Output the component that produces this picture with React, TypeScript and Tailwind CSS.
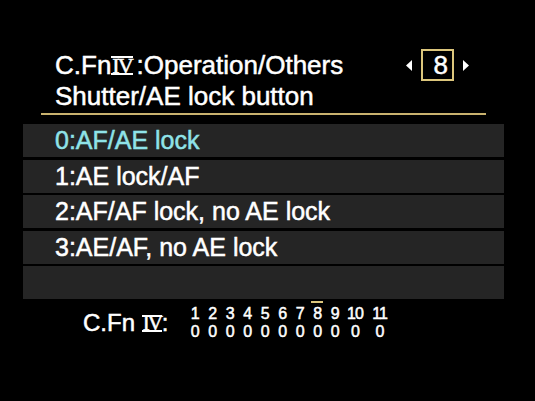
import React from "react";

const options = ["0:AF/AE lock", "1:AE lock/AF", "2:AF/AF lock, no AE lock", "3:AE/AF, no AE lock", ""];

const fnCols = [
  { n: "1", v: "0", w: "w-[17.5px]" },
  { n: "2", v: "0", w: "w-[17.5px]" },
  { n: "3", v: "0", w: "w-[17.5px]" },
  { n: "4", v: "0", w: "w-[17.5px]" },
  { n: "5", v: "0", w: "w-[17.5px]" },
  { n: "6", v: "0", w: "w-[17.5px]" },
  { n: "7", v: "0", w: "w-[17.5px]" },
  { n: "8", v: "0", w: "w-[17.5px]" },
  { n: "9", v: "0", w: "w-[17.5px]" },
  { n: "10", v: "0", w: "w-[23px]" },
  { n: "11", v: "0", w: "w-[26px]" },
];

// roman "IV" with bars top and bottom, like the camera font
function RomanIV({ size }: { size: "lg" | "md" }) {
  return (
    <span
      className={
        size === "lg"
          ? "inline-block border-y-2 border-white font-['Liberation_Serif',serif] text-[22px] leading-[15px] h-[19px] tracking-[-2px] px-[1px] mr-[4px] align-[1px]"
          : "inline-block border-y-2 border-white font-['Liberation_Serif',serif] text-[21px] leading-[13px] h-[17px] tracking-[-2px] px-[1px] align-[1px]"
      }
    >
      IV
    </span>
  );
}

export default function App() {
  return (
    <div className="w-[535px] h-[401px] bg-black text-white font-['Liberation_Sans',Arial,sans-serif] overflow-hidden [-webkit-text-stroke:0.5px_currentColor]">
      {/* header */}
      <div className="pt-[50px] pl-[55px] pr-[66px]">
        <div className="flex items-center justify-between h-[30px]">
          <div className="text-[26px] leading-[30px] whitespace-nowrap">
            C.Fn<RomanIV size="lg" />:Operation/Others
          </div>
          <div className="flex items-center gap-[9px]">
            <svg width="6" height="11" viewBox="0 0 6 11">
              <path d="M6 0 L0 5.5 L6 11 Z" fill="#fff" />
            </svg>
            <div className="w-[33px] h-[32px] border-2 border-[#dcc67c] flex items-center justify-end pr-[4px] text-[26px] leading-none">
              8
            </div>
            <svg width="6" height="11" viewBox="0 0 6 11">
              <path d="M0 0 L6 5.5 L0 11 Z" fill="#fff" />
            </svg>
          </div>
        </div>
        <div className="text-[26px] leading-[30px] mt-[1px] whitespace-nowrap">Shutter/AE lock button</div>
      </div>
      <div className="ml-[41px] mr-[49px] mt-[2px] h-[2px] bg-[#c9b26e]" />

      {/* options */}
      <div className="ml-[23px] mr-[31px] mt-[9px] flex flex-col gap-[2.5px]">
        {options.map((o, i) => (
          <div
            key={i}
            className={
              "h-[33px] bg-[#252525] pl-[32px] flex items-center text-[25px] leading-none whitespace-nowrap " +
              (i === 0 ? "text-[#8fe3e8]" : "text-white")
            }
          >
            {o}
          </div>
        ))}
      </div>

      {/* bottom summary */}
      <div className="flex items-start pl-[83px] mt-[2px]">
        <div className="text-[24px] leading-none w-[103px] whitespace-nowrap mt-[10px]">
          C.Fn <RomanIV size="md" />:
        </div>
        <div className="flex text-[16px] leading-[18px] tracking-[-1px]">
          {fnCols.map((c) => (
            <div key={c.n} className={"flex flex-col items-center " + c.w}>
              <div className={"h-[2px] w-[12px] mb-[2px] " + (c.n === "8" ? "bg-[#dcc67c]" : "bg-transparent")} />
              <div>{c.n}</div>
              <div>{c.v}</div>
            </div>
          ))}
        </div>
      </div>
    </div>
  );
}
